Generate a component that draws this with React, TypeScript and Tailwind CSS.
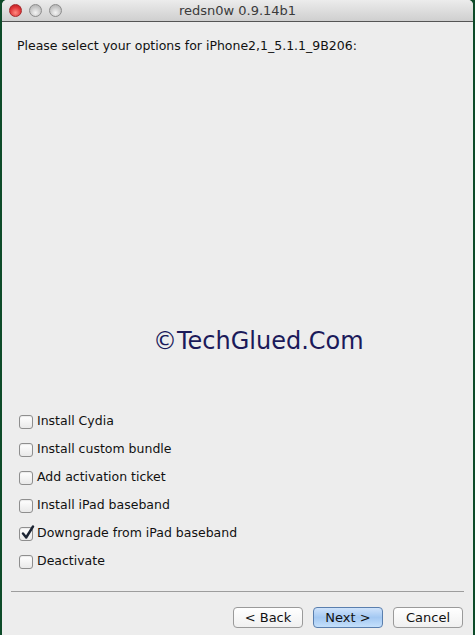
import React from "react";

const options = [
  { label: "Install Cydia", checked: false },
  { label: "Install custom bundle", checked: false },
  { label: "Add activation ticket", checked: false },
  { label: "Install iPad baseband", checked: false },
  { label: "Downgrade from iPad baseband", checked: true },
  { label: "Deactivate", checked: false },
];

const TrafficLight = ({ red }: { red?: boolean }) => (
  <span
    className={
      red
        ? "h-[13px] w-[13px] rounded-full border border-[#a6282a] bg-[radial-gradient(circle_at_50%_70%,#ff8a80,#e0383b_55%,#b3191c)]"
        : "h-[13px] w-[13px] rounded-full border border-[#8c8c8c] bg-[radial-gradient(circle_at_50%_70%,#f4f4f4,#c9c9c9_55%,#a9a9a9)]"
    }
  />
);

const Checkbox = ({ checked }: { checked: boolean }) => (
  <span className="relative flex h-[14px] w-[14px] items-center justify-center rounded-[3px] border border-[#8e8e8e] bg-gradient-to-b from-white to-[#e9e9e9] shadow-[inset_0_1px_1px_rgba(0,0,0,0.08)]">
    {checked && (
      <svg className="absolute -top-[3px] left-[1px]" width="14" height="15" viewBox="0 0 14 15">
        <path d="M2 8.5 L5.2 12.5 L12 1.5" fill="none" stroke="#1b2433" strokeWidth="2.4" strokeLinecap="round" strokeLinejoin="round" />
      </svg>
    )}
  </span>
);

const Button = ({ children, primary }: { children: React.ReactNode; primary?: boolean }) => (
  <button
    className={
      primary
        ? "h-[21px] w-[70px] rounded-[4px] border border-[#5a7fae] bg-gradient-to-b from-[#cfe3fb] via-[#a3c8f2] to-[#c4e0fb] text-[13px] text-[#111]"
        : "h-[21px] w-[70px] rounded-[4px] border border-[#9a9a9a] bg-gradient-to-b from-white to-[#f0f0f0] text-[13px] text-[#111]"
    }
  >
    {children}
  </button>
);

export default function App() {
  return (
    <div className="h-[635px] w-[475px] bg-[#0d4b29] px-[2px] pt-0 font-['DejaVu_Sans',sans-serif]">
      <div className="flex h-full flex-col overflow-hidden rounded-t-[5px] bg-[#ededed]">
        <div className="relative flex h-[22px] items-center border-b border-[#555] bg-gradient-to-b from-[#ececec] to-[#cfcfcf]">
          <div className="absolute left-[7px] top-[4px] flex gap-[7px]">
            <TrafficLight red />
            <TrafficLight />
            <TrafficLight />
          </div>
          <div className="w-full text-center text-[13px] leading-none text-[#3a3a3a]">redsn0w 0.9.14b1</div>
        </div>
        <div className="flex flex-1 flex-col px-[15px] pt-[18px]">
          <p className="text-[12.5px] leading-none text-[#111]">Please select your options for iPhone2,1_5.1.1_9B206:</p>
          <div className="mt-[276px] pl-[136px] font-['Comic_Sans_MS','DejaVu_Sans',sans-serif] text-[24px] leading-none text-[#1b1a5a]">
            ©TechGlued.Com
          </div>
          <div className="mt-[62px] flex flex-col gap-[14px] pl-[2px]">
            {options.map((o) => (
              <label key={o.label} className="flex h-[14px] items-center gap-[4px] text-[12.5px] text-[#111]">
                <Checkbox checked={o.checked} />
                {o.label}
              </label>
            ))}
          </div>
          <div className="mt-[22px] ml-[-6px] mr-[-6px] h-px bg-[#9d9d9d]" />
          <div className="mt-[15px] mr-[-5px] flex justify-end gap-[10px]">
            <Button>&lt; Back</Button>
            <Button primary>Next &gt;</Button>
            <Button>Cancel</Button>
          </div>
        </div>
      </div>
    </div>
  );
}
